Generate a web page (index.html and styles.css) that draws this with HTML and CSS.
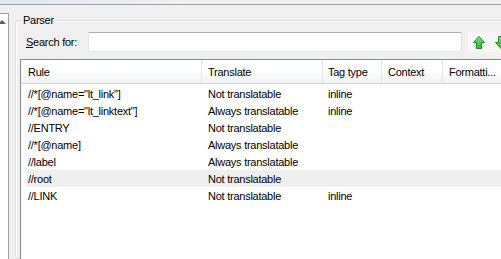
FILE: index.html
```html
<html>
	<head>
		<title>Parser</title>
		<meta name="viewport" content="width=device-width,initial-scale=1">
		<link rel="stylesheet" href="styles.css">
	</head>
	<body>
		<div class="titlebar"></div>
		<div class="workspace">
			<div class="sidepane"><span class="scroll-up"></span></div>
			<div class="group">
				<span class="group-title">Parser</span>
				<div class="search-row">
					<label class="search-label" for="search"><u>S</u>earch for:</label>
					<input id="search" class="search-input" type="text">
					<button class="nav-btn first">
						<svg width="12" height="13" viewBox="0 0 12 13">
							<defs>
								<linearGradient id="gup" x1="0" y1="0" x2="0" y2="1">
									<stop offset="0" stop-color="#7be36f"/>
									<stop offset="1" stop-color="#2fb52f"/>
								</linearGradient>
							</defs>
							<path d="M6 .5 11.5 6.5H8.5V12.5H3.5V6.5H.5Z" fill="url(#gup)" stroke="#1f8a1f"/>
						</svg>
					</button>
					<button class="nav-btn">
						<svg width="12" height="13" viewBox="0 0 12 13">
							<defs>
								<linearGradient id="gdown" x1="0" y1="0" x2="0" y2="1">
									<stop offset="0" stop-color="#7be36f"/>
									<stop offset="1" stop-color="#2fb52f"/>
								</linearGradient>
							</defs>
							<path d="M6 12.5 11.5 6.5H8.5V.5H3.5V6.5H.5Z" fill="url(#gdown)" stroke="#1f8a1f"/>
						</svg>
					</button>
				</div>
				<div class="list">
					<div class="list-head">
						<div class="head-cell">Rule</div>
						<div class="head-cell">Translate</div>
						<div class="head-cell">Tag type</div>
						<div class="head-cell">Context</div>
						<div class="head-cell">Formatti...</div>
					</div>
					<div class="list-body">
						<div class="row"><span>//*[@name="lt_link"]</span><span>Not translatable</span><span>inline</span><span></span><span></span></div>
						<div class="row"><span>//*[@name="lt_linktext"]</span><span>Always translatable</span><span>inline</span><span></span><span></span></div>
						<div class="row"><span>//ENTRY</span><span>Not translatable</span><span></span><span></span><span></span></div>
						<div class="row"><span>//*[@name]</span><span>Always translatable</span><span></span><span></span><span></span></div>
						<div class="row"><span>//label</span><span>Always translatable</span><span></span><span></span><span></span></div>
						<div class="row selected"><span>//root</span><span>Not translatable</span><span></span><span></span><span></span></div>
						<div class="row"><span>//LINK</span><span>Not translatable</span><span>inline</span><span></span><span></span></div>
					</div>
				</div>
			</div>
		</div>
	</body>
</html>
```

FILE: styles.css
```css
* {
	margin: 0;
	padding: 0;
	box-sizing: border-box;
}

body {
	background: #f0f0f0;
	font-family: 'Liberation Sans', Arial, sans-serif;
	font-size: 11px;
	letter-spacing: -0.25px;
	color: #000;
	height: 259px;
	overflow: hidden;
}

.titlebar {
	height: 5px;
	background: linear-gradient(90deg, #dde8f5, #f0f0f0 200px);
	border-bottom: 1px solid #a0a0a0;
}

.workspace {
	display: flex;
	height: 254px;
}

.sidepane {
	flex: 0 0 9px;
	margin-top: 8px;
	background: #fff;
	border-top: 1px solid #a0a0a0;
	border-right: 1px solid #a0a0a0;
	overflow: hidden;
}

.scroll-up {
	display: block;
	width: 0;
	margin: 6px 0 0 -2px;
	border-left: 4px solid transparent;
	border-right: 4px solid transparent;
	border-bottom: 4px solid #606060;
}

.group {
	position: relative;
	flex: 0 0 520px;
	margin: 15px 0 0 6px;
	padding: 11px 0 0 4px;
	border: 1px solid #d5dfe5;
	border-radius: 3px;
	box-shadow: inset 1px 1px 0 #fff;
}

.group-title {
	position: absolute;
	top: -7px;
	left: 5px;
	padding: 0 2px;
	line-height: 13px;
	background: #f0f0f0;
}

.search-row {
	display: flex;
	align-items: center;
	height: 20px;
	margin-left: 6px;
}

.search-label {
	width: 62px;
}

.search-input {
	width: 374px;
	height: 20px;
	background: #fff;
	border: 1px solid;
	border-color: #abadb3 #dbdfe6 #e3e9ef #e2e3ea;
	border-radius: 2px;
}

.nav-btn {
	width: 22px;
	height: 20px;
	display: flex;
	align-items: center;
	justify-content: center;
	background: #f7f7f7;
	border: none;
}

.nav-btn.first {
	margin-left: 6px;
}

.list {
	margin-top: 7px;
	width: 520px;
	height: 220px;
	background: #fff;
	border: 1px solid #828790;
	overflow: hidden;
}

.list-head {
	display: grid;
	grid-template-columns: 181px 121px 59px 61px 1fr;
	height: 24px;
	background: linear-gradient(#fff, #fff 45%, #f2f3f5);
	border-bottom: 1px solid #d5d5d5;
}

.head-cell {
	display: flex;
	align-items: center;
	padding-left: 6px;
	border-right: 1px solid #e3e8ee;
	white-space: nowrap;
}

.head-cell:first-child {
	padding-left: 7px;
}

.head-cell:nth-child(3) {
	padding-left: 5px;
}

.list-body {
	padding-top: 1px;
}

.row {
	display: grid;
	grid-template-columns: 176px 121px 59px 61px 1fr;
	align-items: center;
	height: 17px;
	margin-left: 5px;
}

.row span {
	padding-left: 6px;
	white-space: nowrap;
	overflow: hidden;
}

.row span:first-child {
	padding-left: 2px;
}

.row span:nth-child(3) {
	padding-left: 5px;
}

.row.selected {
	background: #efefef;
}
```
